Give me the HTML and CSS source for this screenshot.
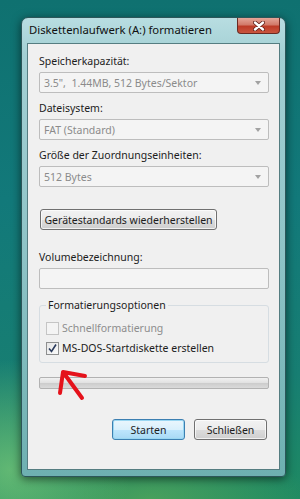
FILE: index.html
```html
<!DOCTYPE html>
<html lang="de">
<head>
    <meta charset="UTF-8">
    <meta name="viewport" content="width=device-width, initial-scale=1.0">
    <title>Diskettenlaufwerk (A:) formatieren</title>
    <link rel="stylesheet" href="styles.css">
</head>
<body>

    <div class="desktop">
        <div class="window">
            <div class="titlebar">
                <span class="title">Diskettenlaufwerk (A:) formatieren</span>
                <div class="close-btn">
                    <svg width="12" height="10" viewBox="0 0 12 10">
                        <path d="M2 1.5 L10 8.5 M10 1.5 L2 8.5" stroke="#5b1c16" stroke-width="4" stroke-linecap="round"/>
                        <path d="M2 1.5 L10 8.5 M10 1.5 L2 8.5" stroke="#fff" stroke-width="2.4" stroke-linecap="round"/>
                    </svg>
                </div>
            </div>

            <div class="client">
                <div class="field-label">Speicherkapazität:</div>
                <div class="combo">
                    <span>3.5",&nbsp; 1.44MB, 512 Bytes/Sektor</span>
                    <span class="combo-arrow"></span>
                </div>

                <div class="field-label">Dateisystem:</div>
                <div class="combo">
                    <span>FAT (Standard)</span>
                    <span class="combo-arrow"></span>
                </div>

                <div class="field-label">Größe der Zuordnungseinheiten:</div>
                <div class="combo combo-last">
                    <span>512 Bytes</span>
                    <span class="combo-arrow"></span>
                </div>

                <button class="btn btn-defaults">Gerätestandards wiederherstellen</button>

                <div class="field-label">Volumebezeichnung:</div>
                <div class="textbox"></div>

                <fieldset class="group">
                    <legend>Formatierungsoptionen</legend>
                    <div class="check-row disabled">
                        <span class="checkbox"></span>
                        <span>Schnellformatierung</span>
                    </div>
                    <div class="check-row">
                        <span class="checkbox checked">
                            <svg width="11" height="11" viewBox="0 0 11 11">
                                <path d="M2 5.5 L4.5 8.5 L9 1.5" stroke="#2a3a5c" stroke-width="1.6" fill="none"/>
                            </svg>
                        </span>
                        <span>MS-DOS-Startdiskette erstellen</span>
                    </div>
                </fieldset>

                <div class="progress"></div>

                <div class="actions">
                    <button class="btn btn-primary">Starten</button>
                    <button class="btn">Schließen</button>
                </div>
            </div>
        </div>

        <svg class="marker" width="300" height="499" viewBox="0 0 300 499">
            <path d="M82 398 L63 372 M60 393 L63 372 L85 376" stroke="#e5121b" stroke-width="4" fill="none" stroke-linecap="round" stroke-linejoin="round"/>
        </svg>
    </div>

</body>
</html>
```

FILE: styles.css
```css
body {
    margin: 0;
    padding: 0;
    font-family: "Noto Sans", "Open Sans", sans-serif;
    font-size: 10.5px;
    color: #1c1c1c;
}

.desktop {
    position: relative;
    width: 300px;
    height: 499px;
    overflow: hidden;
    box-sizing: border-box;
    padding: 17px 0 0 21px;
    background:
        radial-gradient(ellipse 120px 110px at 10px 470px, rgba(120, 200, 120, 0.75), rgba(60, 160, 90, 0) 100%),
        radial-gradient(ellipse 160px 60px at 150px 499px, rgba(90, 170, 90, 0.7), rgba(60, 150, 90, 0) 100%),
        linear-gradient(180deg, #0f7170 0%, #12797a 40%, #177e72 75%, #1f8a62 100%);
}

.window {
    width: 265px;
    height: 460px;
    box-sizing: border-box;
    border: 1px solid #2c5659;
    border-radius: 7px 7px 4px 4px;
    background: linear-gradient(180deg, #b8dde1 0%, #a3d0d4 8%, #8fc4c7 50%, #6eb0b1 100%);
    box-shadow: 0 2px 10px rgba(0, 0, 0, 0.55);
    display: flex;
    flex-direction: column;
}

.titlebar {
    height: 25px;
    display: flex;
    justify-content: space-between;
    align-items: flex-start;
    padding-left: 7px;
}
.title {
    font-size: 11.3px;
    line-height: 24px;
    color: #101010;
}
.close-btn {
    width: 43px;
    height: 16px;
    margin-right: 5px;
    box-sizing: border-box;
    border: 1px solid #6a2a22;
    border-top: none;
    border-radius: 0 0 4px 4px;
    background: linear-gradient(180deg, #e4a698 0%, #d27a69 45%, #bd3b27 55%, #c9553e 100%);
    display: flex;
    align-items: center;
    justify-content: center;
}

.client {
    flex: 1;
    margin: 0 5px 6px 5px;
    border: 1px solid #557d81;
    background: #f0f0f0;
    padding: 10px 10px 0 11px;
    display: flex;
    flex-direction: column;
}

.field-label {
    line-height: 15px;
    margin-bottom: 3px;
}

.combo {
    height: 21px;
    box-sizing: border-box;
    border: 1px solid #bdbdbd;
    border-radius: 2px;
    background: #f4f4f4;
    color: #8b8b8b;
    padding: 0 7px 0 4px;
    display: flex;
    align-items: center;
    justify-content: space-between;
    margin-bottom: 8px;
}
.combo-last {
    margin-bottom: 22px;
}
.combo-arrow {
    width: 0;
    height: 0;
    border-left: 3.5px solid transparent;
    border-right: 3.5px solid transparent;
    border-top: 4px solid #a2a2a2;
}

.textbox {
    height: 21px;
    box-sizing: border-box;
    border: 1px solid #bdbdbd;
    border-radius: 2px;
    background: #f4f4f4;
    margin-bottom: 9px;
}

.btn {
    font-family: inherit;
    font-size: 10.5px;
    color: #1c1c1c;
    height: 21px;
    padding: 0;
    white-space: nowrap;
    border: 1px solid #707070;
    border-radius: 3px;
    background: linear-gradient(180deg, #f2f2f2 0%, #ebebeb 50%, #dddddd 51%, #cfcfcf 100%);
    box-shadow: inset 0 0 0 1px rgba(255, 255, 255, 0.7);
}
.btn-defaults {
    align-self: flex-start;
    width: 177px;
    margin: 0 0 20px 1px;
}
.btn-primary {
    border-color: #3c7fb1;
    background: linear-gradient(180deg, #eaf6fd 0%, #d9f0fc 50%, #bee6fd 51%, #a7d9f5 100%);
    box-shadow: inset 0 0 0 1px #9ad7f2;
}

.group {
    margin: 0;
    padding: 5px 6px 4px 6px;
    border: 1px solid #d6dde2;
    border-radius: 3px;
}
.group legend {
    padding: 0 2px;
    line-height: 15px;
}

.check-row {
    height: 20px;
    display: flex;
    align-items: center;
    gap: 3px;
}
.check-row.disabled {
    color: #8d8d8d;
}
.checkbox {
    width: 13px;
    height: 13px;
    box-sizing: border-box;
    border: 1px solid #8e8f8f;
    background: linear-gradient(135deg, #e6e6e6 0%, #fafafa 100%);
    display: flex;
    align-items: center;
    justify-content: center;
}
.check-row.disabled .checkbox {
    border-color: #c5c5c5;
    background: #f4f4f4;
}

.progress {
    height: 12px;
    margin-top: 14px;
    box-sizing: border-box;
    border: 1px solid #b2b2b2;
    border-radius: 2px;
    background: linear-gradient(180deg, #f1f1f1 0%, #e2e2e2 45%, #cdcdcd 55%, #dadada 100%);
}

.actions {
    display: flex;
    justify-content: flex-end;
    gap: 9px;
    margin: 30px 2px 0 0;
}
.actions .btn {
    width: 73px;
}

.marker {
    position: absolute;
    left: 0;
    top: 0;
    pointer-events: none;
}
```
